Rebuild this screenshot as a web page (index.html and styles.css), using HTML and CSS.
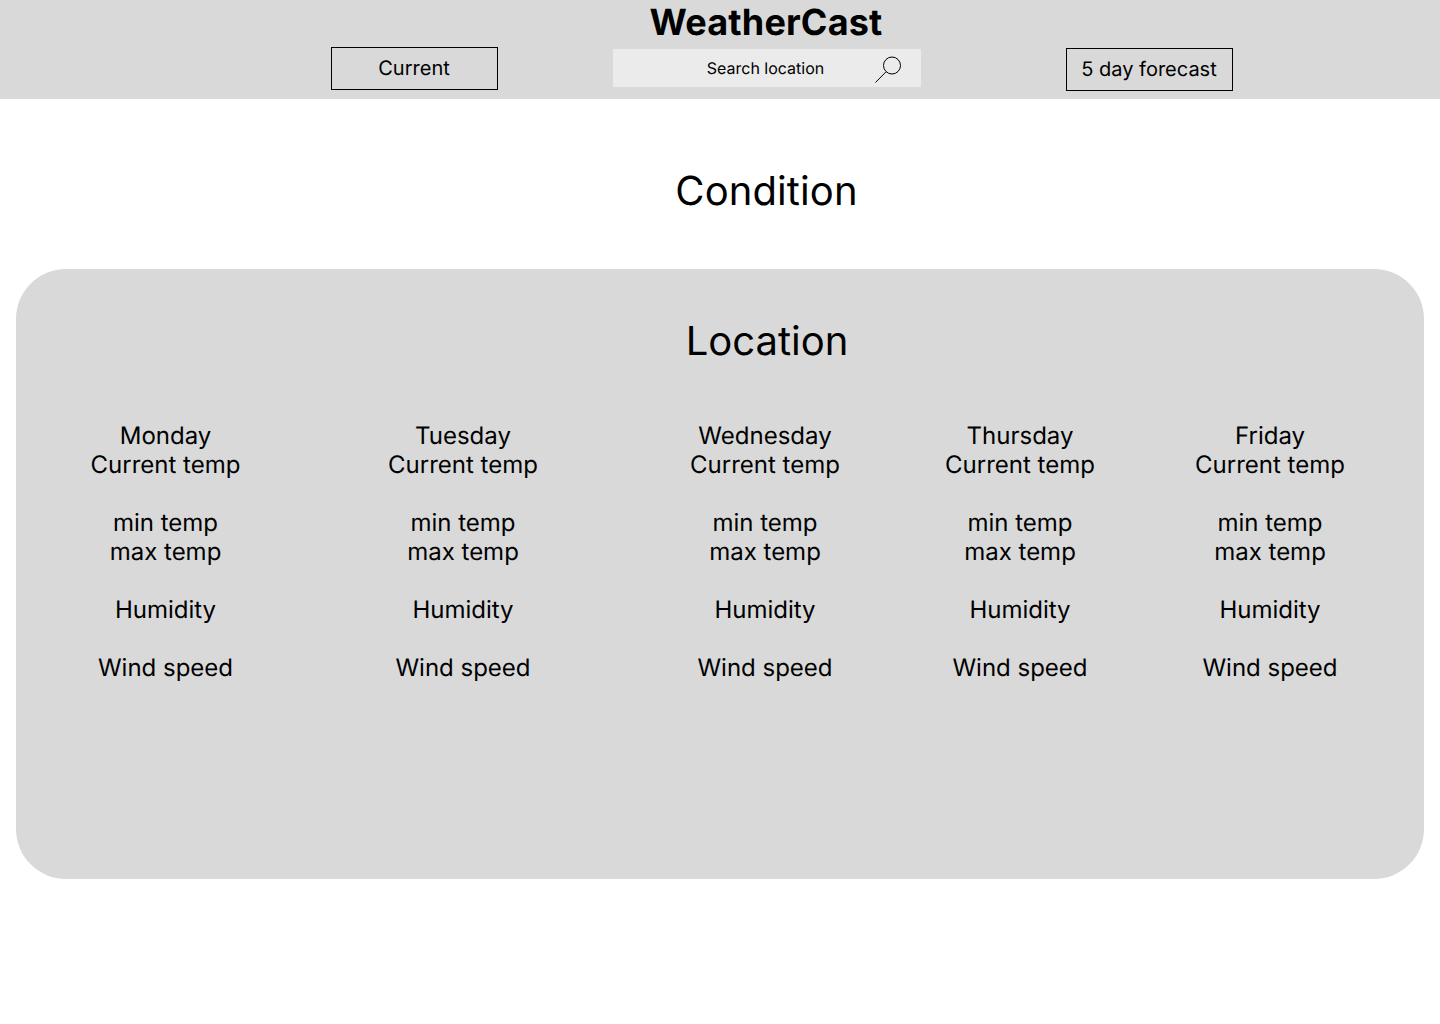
FILE: index.html
```html
<!DOCTYPE html>
<html lang="en">
<head>
<meta charset="utf-8">
<title>WeatherCast</title>
<link rel="stylesheet" href="styles.css">
</head>
<body>
<header class="header">
  <h1 class="brand">WeatherCast</h1>
  <div class="nav">
    <button class="nav-btn nav-current">Current</button>
    <div class="search">
      <span class="search-label">Search location</span>
      <svg class="search-icon" width="28" height="28" viewBox="0 0 28 28" fill="none" stroke="#000" stroke-width="1"><circle cx="17" cy="10.5" r="8.5"/><path d="M11 16.8 L0.5 27.5"/></svg>
    </div>
    <button class="nav-btn nav-forecast">5 day forecast</button>
  </div>
</header>
<main>
  <h2 class="condition">Condition</h2>
  <section class="panel">
    <h2 class="location">Location</h2>
    <div class="days">
      <div class="day day-mon"><p>Monday<br>Current temp</p><p>min temp<br>max temp</p><p>Humidity</p><p>Wind speed</p></div>
      <div class="day day-tue"><p>Tuesday<br>Current temp</p><p>min temp<br>max temp</p><p>Humidity</p><p>Wind speed</p></div>
      <div class="day day-wed"><p>Wednesday<br>Current temp</p><p>min temp<br>max temp</p><p>Humidity</p><p>Wind speed</p></div>
      <div class="day day-thu"><p>Thursday<br>Current temp</p><p>min temp<br>max temp</p><p>Humidity</p><p>Wind speed</p></div>
      <div class="day day-fri"><p>Friday<br>Current temp</p><p>min temp<br>max temp</p><p>Humidity</p><p>Wind speed</p></div>
    </div>
  </section>
</main>
</body>
</html>
```
FILE: styles.css
```css
* { box-sizing: border-box; }
html, body { margin: 0; padding: 0; }
body { height: 1024px; background: #fff; color: #000; font-family: Inter, sans-serif; overflow: hidden; text-rendering: geometricPrecision; }
.header { height: 99px; background: #d9d9d9; display: flex; flex-direction: column; align-items: center; }
.brand { margin: 0 0 0 92px; height: 47px; font-size: 36px; line-height: 44px; font-weight: 700; letter-spacing: 0.18px; }
.nav { width: 902px; margin-left: 123px; display: flex; align-items: flex-start; }
.nav-btn { width: 167px; height: 43px; border: 1px solid #000; background: transparent; font: 400 20px/24px Inter, sans-serif; color: #000; padding: 0 0 2px; text-rendering: geometricPrecision; }
.nav-forecast { margin-top: 1px; }
.search { width: 308px; height: 38px; margin: 2px 145px 0 115px; background: #ebebeb; display: flex; align-items: center; position: relative; }
.search-label { width: 306px; text-align: center; font-size: 16px; line-height: 19px; }
.search-icon { position: absolute; left: 262px; top: 6px; }
.condition { margin: 68px 0 0 93px; text-align: center; font-size: 40px; line-height: 48px; font-weight: 400; letter-spacing: 0.1px; }
.panel { margin: 54px 16px 0 16px; height: 610px; border-radius: 50px; background: #d9d9d9; padding-top: 48px; }
.location { margin: 0 0 0 94px; text-align: center; font-size: 40px; line-height: 48px; font-weight: 400; }
.days { height: 280px; margin-top: 56px; display: flex; }
.day { text-align: center; font-size: 24px; line-height: 29px; flex: none; }
.day p { margin: 0 0 29px; }
.day-mon { width: 299px; }
.day-tue { width: 298px; margin-left: -1px; }
.day-wed { width: 306px; }
.day-thu { width: 204px; }
.day-fri { width: 296px; }
```
